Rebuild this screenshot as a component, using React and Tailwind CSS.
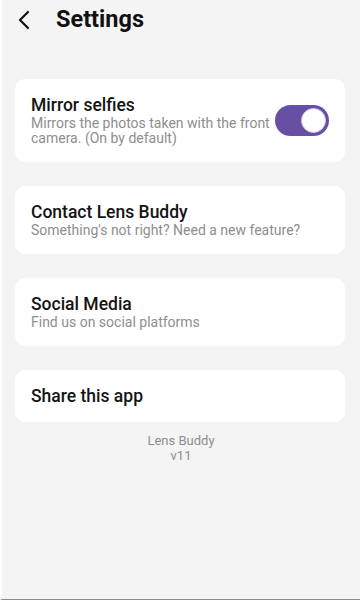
import React, { useState } from "react";

const Card = ({ title, subtitle, children }) => {
  return (
    <div className="flex items-center bg-white rounded-[10px] px-4 py-4">
      <div className="flex-1 min-w-0 -mr-1">
        <div className="text-[17.5px] leading-5 font-medium text-[#141414]">{title}</div>
        {subtitle && (
          <div className="text-[14px] leading-[15px] text-[#8e8e8e] mt-[1px]">
            {subtitle}
          </div>
        )}
      </div>
      {children}
    </div>
  );
};

const Toggle = ({ on, onClick }) => {
  return (
    <button
      onClick={onClick}
      className={
        "shrink-0 w-[54px] h-[31px] rounded-full flex items-center px-[3px] " +
        (on ? "bg-[#6750a4] justify-end" : "bg-[#d9d4e3] justify-start")
      }
    >
      <span className="block w-[25px] h-[25px] rounded-full bg-white border border-[#cfc4ec]"></span>
    </button>
  );
};

const App = () => {
  const [mirror, setMirror] = useState(true);

  return (
    <div
      className="w-[360px] h-[600px] bg-[#f4f4f4] border-l-2 border-white border-b border-b-[#8a8a8a] overflow-hidden"
      style={{ fontFamily: "Roboto, 'Noto Sans', sans-serif" }}
    >
      <div className="flex items-center h-10 pl-[15px]">
        <svg width="16" height="20" viewBox="0 0 16 20" fill="none">
          <polyline
            points="11,2 3,10 11,18"
            stroke="#111"
            strokeWidth="2.2"
            strokeLinecap="round"
            strokeLinejoin="round"
          />
        </svg>
        <h1 className="ml-[23px] text-[23.5px] font-bold text-[#111] leading-none">
          Settings
        </h1>
      </div>

      <div className="flex flex-col gap-6 mt-[39px] pl-[13px] pr-[15px]">
        <Card
          title="Mirror selfies"
          subtitle="Mirrors the photos taken with the front camera. (On by default)"
        >
          <Toggle on={mirror} onClick={() => setMirror(!mirror)} />
        </Card>
        <Card
          title="Contact Lens Buddy"
          subtitle="Something's not right? Need a new feature?"
        />
        <Card title="Social Media" subtitle="Find us on social platforms" />
        <Card title="Share this app" />
      </div>

      <div className="mt-[11px] text-center text-[13px] leading-[15px] text-[#8e8e8e]">
        <div>Lens Buddy</div>
        <div>v11</div>
      </div>
    </div>
  );
};

export default App;
